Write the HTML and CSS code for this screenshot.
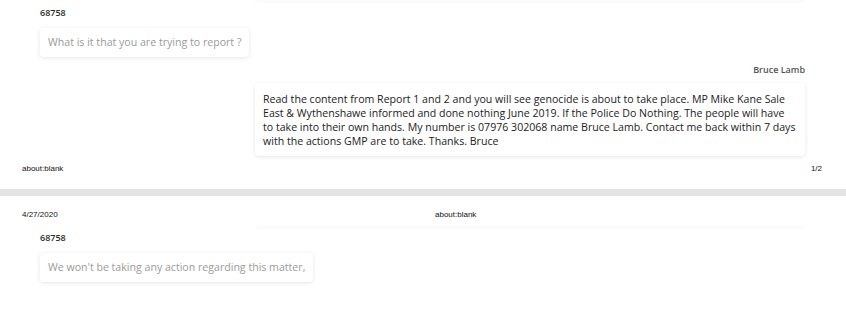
FILE: index.html
```html
<!DOCTYPE html>
<html>
<head>
<meta charset="utf-8">
<link rel="stylesheet" href="styles.css">
</head>
<body>
<div class="page page-first">
  <div class="cut-card"></div>
  <div class="thread">
    <div class="msg msg-left">
      <div class="name">68758</div>
      <div class="bubble bubble-muted">What is it that you are trying to report ?</div>
    </div>
    <div class="msg msg-right">
      <div class="name name-right">Bruce Lamb</div>
      <div class="bubble bubble-big">Read the content from Report 1 and 2 and you will see genocide is about to take place. MP Mike Kane Sale East &amp; Wythenshawe informed and done nothing June 2019. If the Police Do Nothing. The people will have to take into their own hands. My number is 07976 302068 name Bruce Lamb. Contact me back within 7 days with the actions GMP are to take. Thanks. Bruce</div>
    </div>
  </div>
  <div class="print-footer">
    <span>about:blank</span>
    <span>1/2</span>
  </div>
</div>
<div class="page-gap"></div>
<div class="page page-second">
  <div class="print-header">
    <span>4/27/2020</span>
    <span>about:blank</span>
  </div>
  <div class="cut-card cut-card-second"></div>
  <div class="thread">
    <div class="msg msg-left msg-second">
      <div class="name">68758</div>
      <div class="bubble bubble-muted">We won't be taking any action regarding this matter,</div>
    </div>
  </div>
</div>
</body>
</html>
```

FILE: styles.css
```css
html, body {
  margin: 0;
  padding: 0;
  background: #ffffff;
}
body {
  width: 846px;
  font-family: "Open Sans", "Liberation Sans", sans-serif;
}
.page {
  display: flex;
  flex-direction: column;
}
.page-first {
  height: 189px;
}
.page-second {
  height: 118px;
}
.page-gap {
  height: 7px;
  background: #e3e3e3;
}
.cut-card {
  margin: 0 41px 0 255px;
  height: 1px;
  background: #fbfbfb;
  box-shadow: 0 1px 3px rgba(0, 0, 0, 0.07);
}
.cut-card-second {
  margin-top: 6px;
}
.thread {
  padding: 0 41px 0 40px;
  display: flex;
  flex-direction: column;
}
.msg {
  display: flex;
  flex-direction: column;
}
.msg-left {
  align-items: flex-start;
}
.msg-right {
  align-items: flex-end;
}
.name {
  margin-top: 6px;
  font-size: 9px;
  line-height: 12px;
  font-weight: 600;
  color: #2b2b2b;
}
.msg-second .name {
  margin-top: 5px;
}
.name-right {
  margin-top: 7px;
  color: #555555;
}
.bubble {
  margin-top: 9px;
  background: #ffffff;
  border-radius: 4px;
  box-shadow: 0 1px 4px rgba(0, 0, 0, 0.1);
  padding: 7px 8px;
  font-size: 10.6px;
  line-height: 15px;
}
.bubble-muted {
  color: #9b9b9b;
}
.bubble-big {
  margin-top: 7px;
  width: 534px;
  padding: 9px 8px 8px;
  line-height: 14px;
  color: #222222;
}
.print-footer {
  margin-top: auto;
  padding: 0 24px 15px 22px;
  display: flex;
  justify-content: space-between;
  font-family: "Liberation Sans", Arial, sans-serif;
  font-size: 8px;
  line-height: 10px;
  color: #111111;
}
.print-header {
  padding: 14px 22px 0;
  display: grid;
  grid-template-columns: 413px 1fr;
  font-family: "Liberation Sans", Arial, sans-serif;
  font-size: 8px;
  line-height: 10px;
  color: #111111;
}
```
